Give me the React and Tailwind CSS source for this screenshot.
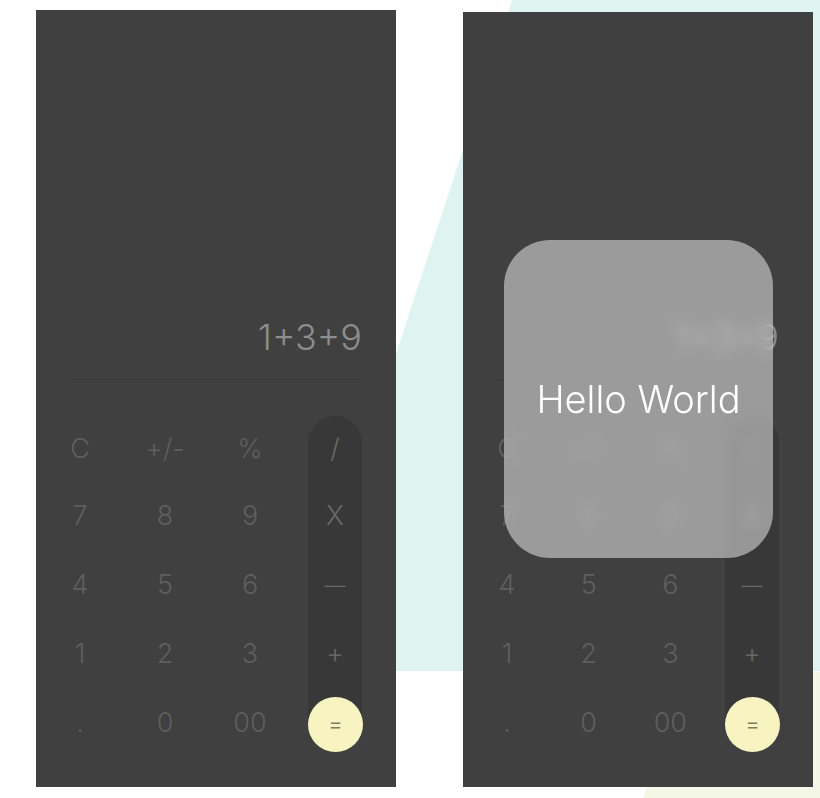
import React from "react";

const cols = [
  ["C", "7", "4", "1", "."],
  ["+/-", "8", "5", "2", "0"],
  ["%", "9", "6", "3", "00"],
];
const ops = ["/", "X", "—", "+"];

function Key({ label, h, op }) {
  return (
    <div
      className={`flex items-center justify-center ${h} ${op ? "text-[#676867]" : "text-[#5e5f5e]"} ${label === "—" ? "text-[21px]" : "text-[27px]"}`}
    >
      {label}
    </div>
  );
}

function Phone({ width, height, overlay }) {
  return (
    <div
      className={`relative flex flex-col bg-[#3f403f] ${width} ${height}`}
      style={{ fontFamily: "Inter, 'Open Sans', sans-serif" }}
    >
      <div className="flex flex-1 items-end justify-end pr-[34px] pb-[24px]">
        <div className="text-[36px] font-light leading-none text-[#8c8d8c]">1+3+9</div>
      </div>
      <div className="mx-[34px] h-px bg-[#393a39]" />
      <div className="mt-[36px] flex justify-between pl-[17px] pr-[34px] pb-[29px] font-light">
        {cols.map((c, i) => (
          <div key={i} className="flex w-[54px] flex-col">
            {c.map((k, j) => (
              <Key key={j} label={k} h={j === 0 ? "h-[66px]" : "h-[69px]"} />
            ))}
          </div>
        ))}
        <div className="flex h-[336px] w-[54px] flex-col rounded-full bg-[#373837]">
          {ops.map((k, j) => (
            <Key key={j} label={k} op h={j === 0 ? "h-[66px]" : "h-[69px]"} />
          ))}
          <div className="mt-[8px] flex h-[55px] w-[55px] items-center justify-center rounded-full bg-[#f8f4c1] text-[23px] text-[#7f7c62]">
            =
          </div>
        </div>
      </div>
      {overlay && (
        <div className="absolute left-[41px] top-[228px] flex h-[318px] w-[269px] items-center justify-center rounded-[46px] bg-white/[0.48] backdrop-blur-[7px]">
          <span className="text-[38px] font-light text-white">Hello World</span>
        </div>
      )}
    </div>
  );
}

export default function App() {
  return (
    <div className="relative h-[798px] w-[820px] overflow-hidden bg-white">
      <svg className="absolute inset-0" width="820" height="798" viewBox="0 0 820 798">
        <polygon points="512,0 820,0 820,671 292,671" fill="#dff4f1" />
        <polygon points="684,672 820,672 820,798 643,798" fill="#f4f7e5" />
      </svg>
      <div className="relative flex items-start pl-[36px]">
        <div className="mt-[10px]">
          <Phone width="w-[360px]" height="h-[777px]" />
        </div>
        <div className="ml-[67px] mt-[12px]">
          <Phone width="w-[350px]" height="h-[775px]" overlay />
        </div>
      </div>
    </div>
  );
}
